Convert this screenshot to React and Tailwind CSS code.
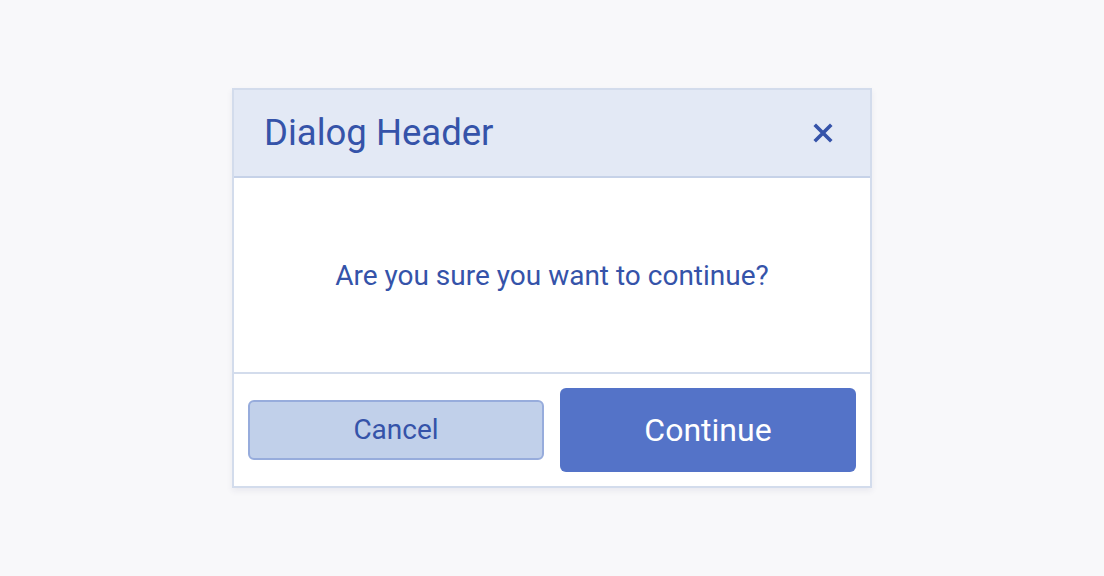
import React from 'react';

/* Simple confirm dialog */
export default function App() {
  return (
    <div
      className="min-h-screen w-full bg-[#f8f8fa] flex items-start justify-center pt-[88px]"
      style={{ fontFamily: 'Roboto, "Liberation Sans", sans-serif' }}
    >
      <div className="w-[640px] h-[400px] flex flex-col border-2 border-[#d3dcec] bg-white shadow-[0_3px_6px_rgba(60,70,110,0.08)]">
        {/* Header */}
        <div className="h-[88px] shrink-0 flex items-center justify-between pl-[30px] pr-[37px] bg-[#e3e9f5] border-b-2 border-[#c6d2e8]">
          <h2 className="text-[36.5px] text-[#3553a9] leading-none">Dialog Header</h2>
          <button aria-label="Close" className="text-[#3553a9]">
            <svg width="20" height="20" viewBox="0 0 20 20" fill="none" stroke="currentColor" strokeWidth="3.6" strokeLinecap="square">
              <path d="M3 3L17 17M17 3L3 17" />
            </svg>
          </button>
        </div>

        {/* Body */}
        <div className="h-[196px] shrink-0 flex items-center justify-center border-b-2 border-[#d3dcec]">
          <p className="text-[28px] text-[#3553a9] pt-[2px]">Are you sure you want to continue?</p>
        </div>

        {/* Footer */}
        <div className="flex-1 flex items-center gap-4 px-[14px]">
          <button className="w-[296px] h-[60px] rounded-[6px] border-2 border-[#97acdc] bg-[#c1d0ea] text-[#3553a9] text-[28px]">
            Cancel
          </button>
          <button className="w-[296px] h-[84px] rounded-[6px] bg-[#5473c8] text-white text-[32px]">
            Continue
          </button>
        </div>
      </div>
    </div>
  );
}
